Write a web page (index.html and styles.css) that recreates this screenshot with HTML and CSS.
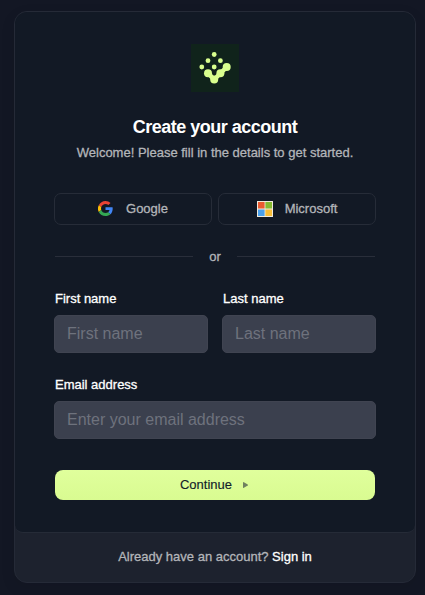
FILE: index.html
```html
<!DOCTYPE html>
<html lang="en">
<head>
<meta charset="utf-8">
<title>Create your account</title>
<link rel="stylesheet" href="styles.css">
</head>
<body>
<main class="card">
  <section class="panel">
    <svg class="logo" viewBox="0 0 48 48" aria-hidden="true">
      <rect width="48" height="48" fill="#10231b"/>
      <g fill="#d9ff8e">
        <circle cx="23.2" cy="10.5" r="2.4"/><circle cx="17" cy="16.7" r="2.4"/><circle cx="29.4" cy="16.7" r="2.4"/>
        <circle cx="10.8" cy="23" r="2.4"/><circle cx="23.2" cy="23" r="2.4"/>
        <circle cx="35.7" cy="23" r="4"/><circle cx="17" cy="29.2" r="4"/><circle cx="29.4" cy="29.2" r="4"/><circle cx="23.2" cy="35.5" r="4"/>
      </g>
      <path d="M17 29.2l6.2 6.3 12.5-12.5" fill="none" stroke="#d9ff8e" stroke-width="4.5"/>
    </svg>
    <h1 class="title">Create your account</h1>
    <p class="subtitle">Welcome! Please fill in the details to get started.</p>
    <div class="socials">
      <button class="social" type="button">
        <svg class="social-icon" viewBox="0 0 48 48" aria-hidden="true">
          <path fill="#ea4335" d="M24 9.500c3.500 0 6.700 1.200 9.200 3.600l6.900-6.900C35.900 2.400 30.500 0 24 0 14.600 0 6.500 5.400 2.600 13.200l8 6.200C12.400 13.700 17.700 9.500 24 9.500z"/>
          <path fill="#4285f4" d="M47 24.600c0-1.600-.2-3.100-.4-4.600H24v9h12.900c-.6 3-2.200 5.500-4.700 7.200l7.700 6C44.400 38 47 31.800 47 24.600z"/>
          <path fill="#fbbc05" d="M10.500 28.600A14.500 14.500 0 0 1 10.500 19.400l-8-6.200a24 24 0 0 0 0 21.600z"/>
          <path fill="#34a853" d="M24 48c6.500 0 11.900-2.100 15.900-5.800l-7.700-6c-2.200 1.500-4.900 2.300-8.200 2.300-6.300 0-11.600-4.200-13.500-9.900l-8 6.200C6.500 42.600 14.600 48 24 48z"/>
        </svg>
        <span>Google</span>
      </button>
      <button class="social" type="button">
        <svg class="social-icon" viewBox="0 0 16 16" aria-hidden="true">
          <path fill="#f1ebdd" d="M0 0h16v16H0z"/>
          <path fill="#eb5a30" d="M1 1h6.600v6.600H1z"/><path fill="#86b930" d="M8.400 1H15v6.600H8.400z"/>
          <path fill="#499fea" d="M1 8.400h6.600V15H1z"/><path fill="#f7bd38" d="M8.400 8.400H15V15H8.400z"/>
        </svg>
        <span>Microsoft</span>
      </button>
    </div>
    <div class="divider"><span>or</span></div>
    <form class="form">
      <div class="names">
        <label class="field"><span class="label">First name</span><input class="input" type="text" placeholder="First name"></label>
        <label class="field"><span class="label">Last name</span><input class="input" type="text" placeholder="Last name"></label>
      </div>
      <label class="field"><span class="label">Email address</span><input class="input" type="email" placeholder="Enter your email address"></label>
      <button class="continue" type="button"><span>Continue</span><svg class="arrow" viewBox="0 0 5 6" aria-hidden="true"><path d="M0 .4v5.200q0 .5.500.3L4.700 3.400q.5-.4 0-.8L.5.1Q0-.1 0 .4z"/></svg></button>
    </form>
  </section>
  <footer class="footer">Already have an account? <a class="link" href="#">Sign in</a></footer>
</main>
</body>
</html>
```
FILE: styles.css
```css
* { box-sizing: border-box; }
body {
  margin: 0;
  padding: 11px 9px 12px 14px;
  height: 595px;
  overflow: hidden;
  background: #131724;
  font: 13px/18px "Liberation Sans", Arial, sans-serif;
  color: #b3b5b9;
}
.card {
  width: 402px;
  height: 572px;
  border: 1px solid #252a37;
  border-radius: 13px;
  background: #1d222e;
  overflow: hidden;
  box-shadow: 0 5px 15px rgba(0, 0, 0, .08);
}
.panel {
  display: flex;
  flex-direction: column;
  height: 521px;
  padding: 32px 39px 0;
  background: #121925;
  border-bottom: 1px solid #252b37;
  border-radius: 0 0 8px 8px;
}
.logo { width: 48px; height: 48px; align-self: center; }
.title {
  margin: 23px 0 0;
  font-size: 18px;
  line-height: 24px;
  font-weight: 700;
  letter-spacing: -.5px;
  text-align: center;
  color: #fff;
}
.subtitle { margin: 5px 0 0; text-align: center; -webkit-text-stroke: .3px; }
.socials { display: flex; gap: 6px; margin-top: 31px; }
.social {
  flex: 1;
  height: 32px;
  display: flex;
  align-items: center;
  justify-content: center;
  gap: 12px;
  padding: 0;
  border: 1px solid #262c38;
  border-radius: 7px;
  background: transparent;
  font: inherit;
  color: #b3b5b9;
  -webkit-text-stroke: .3px;
}
.social-icon { width: 16px; height: 16px; }
.social:first-child { gap: 13px; }
.social:first-child .social-icon { width: 15px; height: 15px; margin-bottom: 1px; }
.divider {
  display: flex;
  align-items: center;
  gap: 16px;
  margin: 23px 1px 0;
  -webkit-text-stroke: .3px;
}
.divider::before, .divider::after { content: ""; flex: 1; height: 1px; margin-bottom: 1px; background: #292e3a; }
.form { display: flex; flex-direction: column; margin-top: 24px; }
.names { display: grid; grid-template-columns: 154px 154px; gap: 14px; margin-bottom: 23px; }
.field { display: flex; flex-direction: column; }
.label { padding-left: 1px; color: #fff; -webkit-text-stroke: .3px; }
.input {
  width: 100%;
  height: 38px;
  margin-top: 7px;
  padding: 0 12px;
  border: 1px solid #404451;
  border-radius: 5px;
  background: #3b404e;
  font: 16px "Liberation Sans", Arial, sans-serif;
  color: #fff;
}
.input::placeholder { color: #6e727d; opacity: 1; }
.continue {
  display: flex;
  align-items: center;
  justify-content: center;
  gap: 11px;
  height: 30px;
  margin: 31px 1px 0;
  padding: 0 2px 0 0;
  border: 0;
  border-radius: 8px;
  background: linear-gradient(#e0ff9c, #d9fb91);
  font: inherit;
  color: #131d2a;
  -webkit-text-stroke: .15px;
}
.arrow { width: 5px; height: 6px; fill: #6f815f; }
.footer { padding-top: 15px; text-align: center; -webkit-text-stroke: .3px; }
.link { color: #fff; text-decoration: none; }
```
